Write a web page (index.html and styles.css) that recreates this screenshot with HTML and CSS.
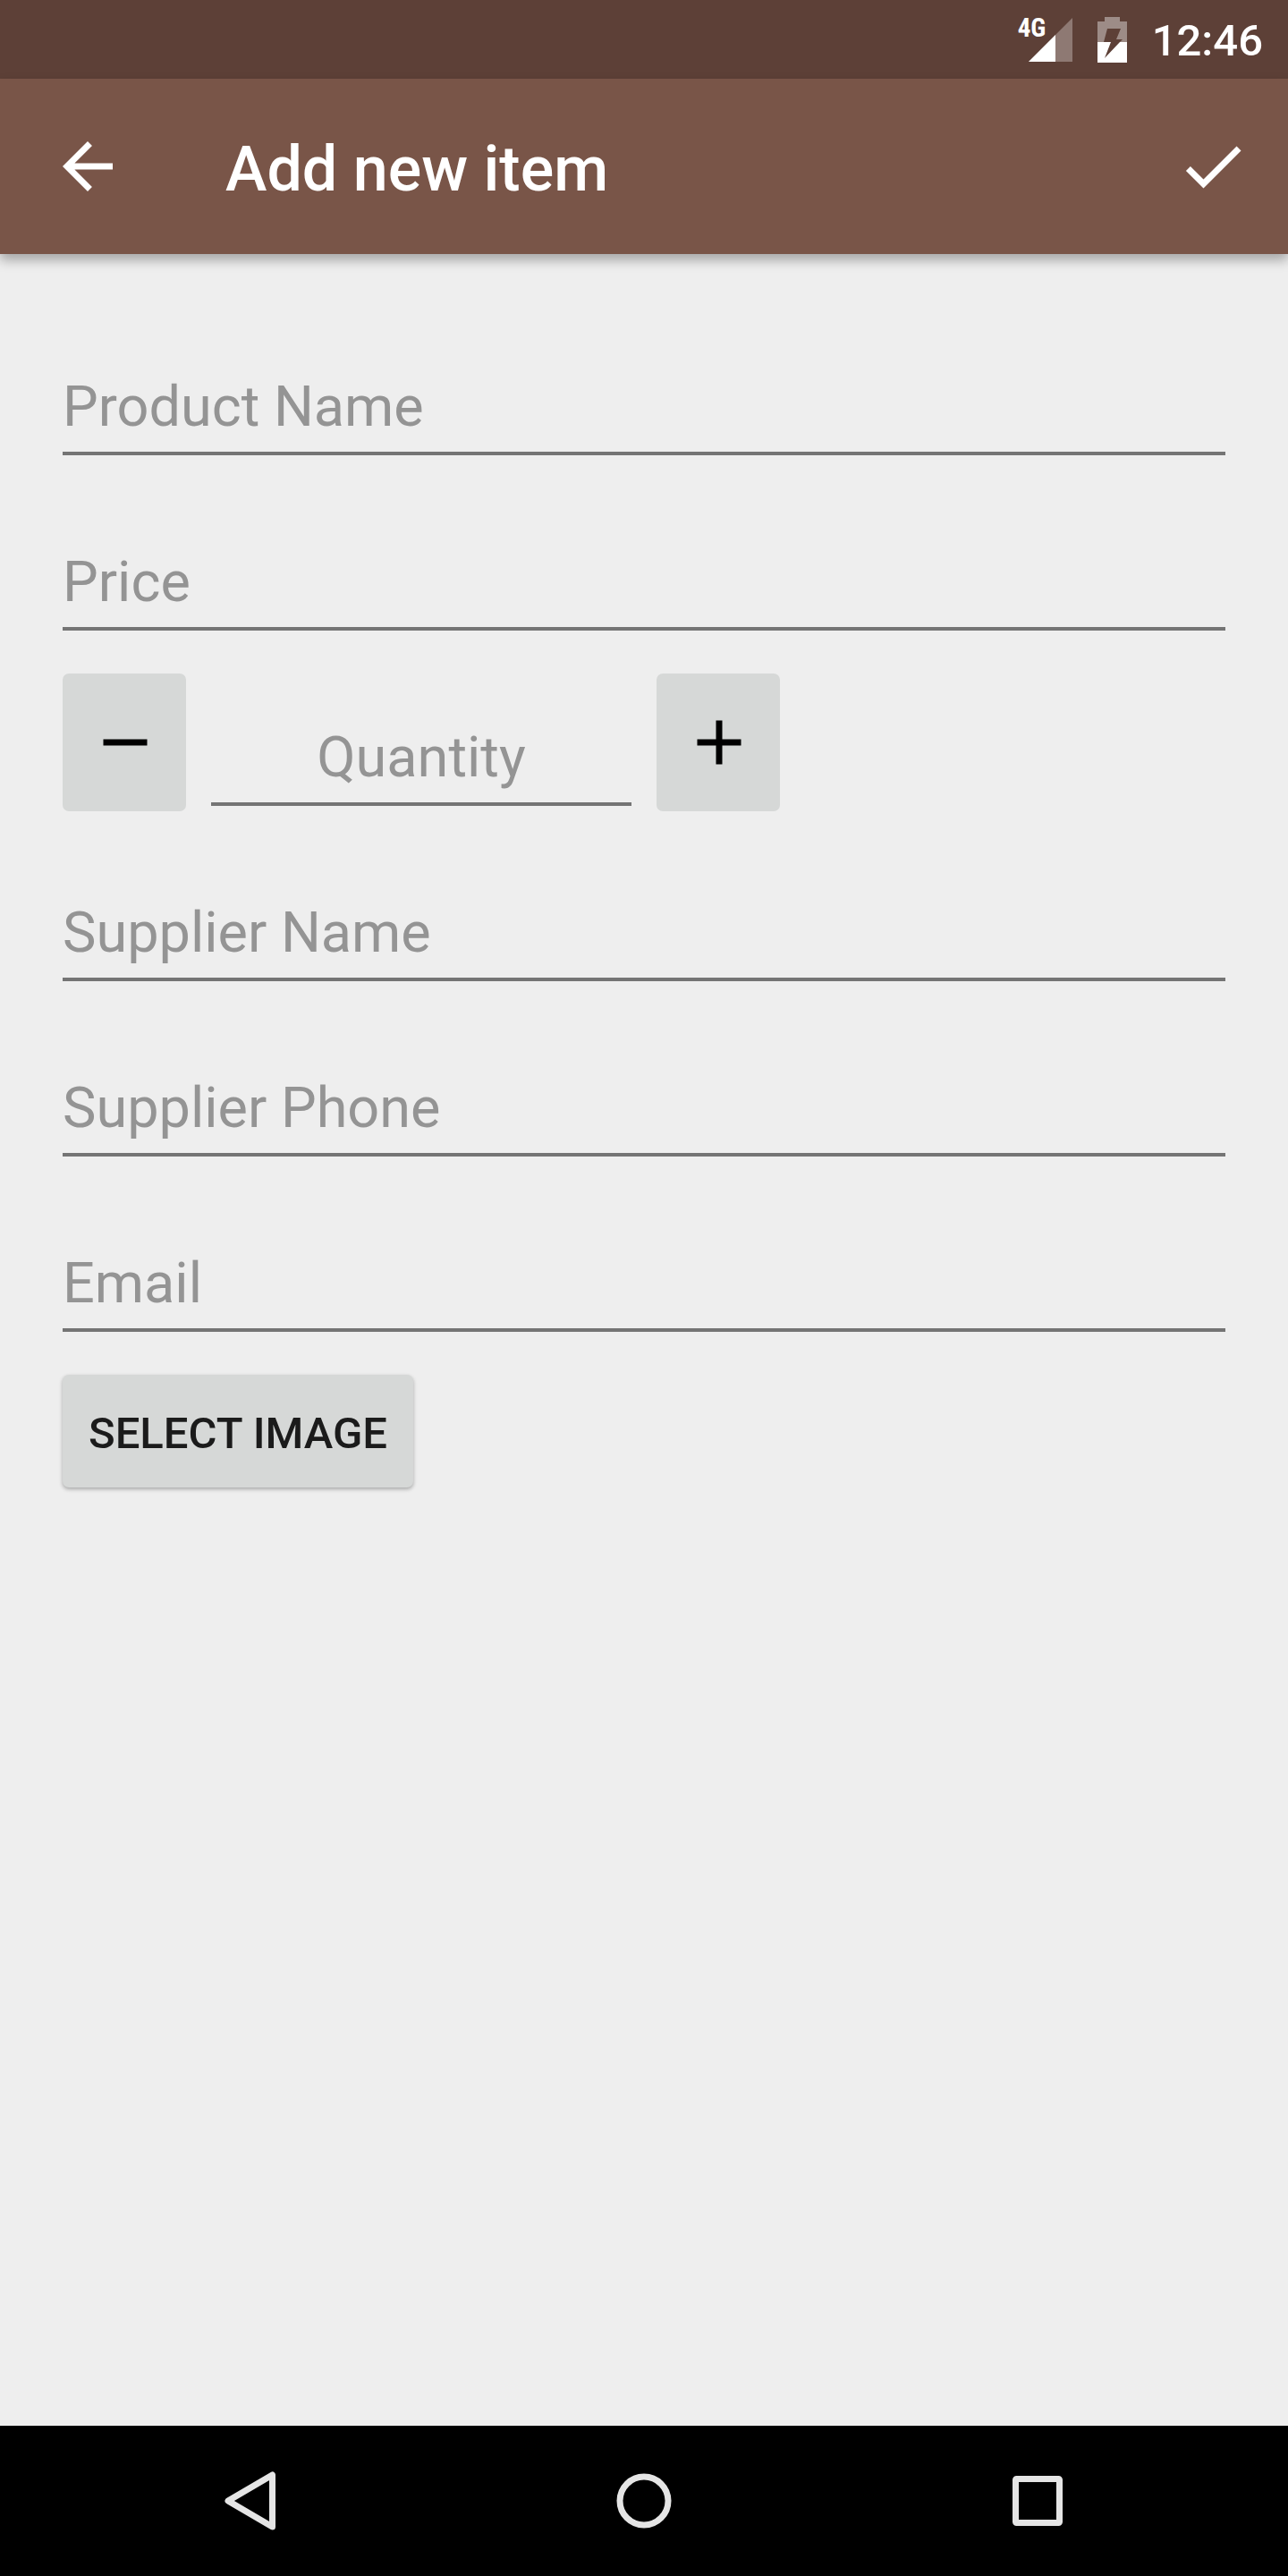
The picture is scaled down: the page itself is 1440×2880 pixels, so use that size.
FILE: index.html
```html
<!DOCTYPE html>
<html lang="en">
<head>
  <meta charset="utf-8">
  <meta name="viewport" content="width=device-width, initial-scale=1">
  <title>Add new item</title>
  <link rel="stylesheet" href="styles.css">
</head>
<body>
  <div class="status-bar">
    <div class="signal">
      <span class="signal-type">4G</span>
      <svg width="49" height="49" viewBox="0 0 49 49" aria-hidden="true">
        <path d="M49 0V49H0Z" fill="#fff" fill-opacity=".3"/>
        <path d="M30 19V49H0Z" fill="#fff"/>
      </svg>
    </div>
    <svg class="battery" width="33" height="51" viewBox="0 0 33 51" aria-hidden="true">
      <path fill="#fff" fill-opacity=".4" d="M8 0H25V5H33V28H25L28 25H21L26 13H11L7 28H0V5H8Z"/>
      <path fill="#fff" d="M0 28H15L8 46L25 28H33V51H0Z"/>
    </svg>
    <time class="clock">12:46</time>
  </div>

  <header class="app-bar">
    <button class="icon-button" type="button" aria-label="Back">
      <svg width="84" height="84" viewBox="0 0 24 24" fill="#fff"><path d="M20 11H7.83l5.59-5.59L12 4l-8 8 8 8 1.41-1.41L7.83 13H20v-2z"/></svg>
    </button>
    <h1 class="title">Add new item</h1>
    <button class="icon-button" type="submit" form="item-form" aria-label="Save">
      <svg width="84" height="84" viewBox="0 0 24 24" fill="#fff"><path d="M9 16.17L4.83 12l-1.42 1.41L9 19 21 7l-1.41-1.41z"/></svg>
    </button>
  </header>

  <main class="content">
    <form class="item-form" id="item-form">
      <input class="field" type="text" placeholder="Product Name" aria-label="Product Name">
      <input class="field" type="text" inputmode="decimal" placeholder="Price" aria-label="Price">
      <div class="quantity-row">
        <button class="step-button" type="button" aria-label="Decrease quantity">
          <svg width="84" height="84" viewBox="0 0 24 24"><path d="M19 13H5v-2h14v2z"/></svg>
        </button>
        <input class="field quantity" type="text" inputmode="numeric" placeholder="Quantity" aria-label="Quantity">
        <button class="step-button" type="button" aria-label="Increase quantity">
          <svg width="84" height="84" viewBox="0 0 24 24"><path d="M19 13h-6v6h-2v-6H5v-2h6V5h2v6h6v2z"/></svg>
        </button>
      </div>
      <input class="field" type="text" placeholder="Supplier Name" aria-label="Supplier Name">
      <input class="field" type="tel" placeholder="Supplier Phone" aria-label="Supplier Phone">
      <input class="field" type="email" placeholder="Email" aria-label="Email">
      <button class="image-button" type="button">SELECT IMAGE</button>
    </form>
  </main>

  <nav class="nav-bar">
    <button class="nav-button" type="button" aria-label="Back">
      <svg width="84" height="84" viewBox="0 0 84 84"><path d="M17 42L66.500 13V71Z"/></svg>
    </button>
    <button class="nav-button" type="button" aria-label="Home">
      <svg width="84" height="84" viewBox="0 0 84 84"><circle cx="42" cy="42" r="27"/></svg>
    </button>
    <button class="nav-button" type="button" aria-label="Recent apps">
      <svg width="84" height="84" viewBox="0 0 84 84"><rect x="17.500" y="17.500" width="49" height="49" rx="1"/></svg>
    </button>
  </nav>
</body>
</html>
```

FILE: styles.css
```css
* {
  box-sizing: border-box;
}

body {
  margin: 0;
  min-height: 100vh;
  display: flex;
  flex-direction: column;
  background: #eeeeee;
  font-family: Roboto, "Liberation Sans", sans-serif;
}

button {
  margin: 0;
  padding: 0;
  border: 0;
  background: none;
  font-family: inherit;
  cursor: pointer;
}

svg {
  display: block;
}

/* System status bar */
.status-bar {
  height: 88px;
  padding: 0 28px 0 0;
  display: flex;
  justify-content: flex-end;
  align-items: center;
  gap: 28px;
  background: #5d4037;
  color: #ffffff;
}

.signal {
  position: relative;
  padding-left: 12px;
}

.signal-type {
  position: absolute;
  top: -4px;
  left: 0;
  font-family: "Roboto Condensed", "Liberation Sans Narrow", Roboto, sans-serif;
  font-size: 29px;
  line-height: 30px;
  font-weight: 700;
}

.clock {
  padding-top: 4px;
  font-size: 49px;
  line-height: 56px;
  font-weight: 500;
}

/* App bar */
.app-bar {
  position: relative;
  height: 196px;
  padding: 0 42px 0 56px;
  display: flex;
  align-items: center;
  background: #795548;
  color: #ffffff;
  box-shadow: 0 7px 12px rgba(0, 0, 0, 0.3);
}

.title {
  flex: 1;
  margin: 0;
  padding: 6px 0 0 112px;
  font-size: 70px;
  line-height: 84px;
  font-weight: 500;
}

/* Form */
.content {
  flex: 1;
}

.item-form {
  padding: 70px;
  display: flex;
  flex-direction: column;
  gap: 35px;
}

.field {
  width: 100%;
  min-width: 0;
  margin: 0 0 6px;
  padding: 64px 0 13px;
  border: 0;
  border-bottom: 4px solid #747474;
  border-radius: 0;
  outline: 0;
  background: none;
  color: #212121;
  font-family: inherit;
  font-size: 63px;
  line-height: 74px;
}

.field::placeholder {
  color: #949494;
  opacity: 1;
}

.quantity-row {
  display: flex;
  align-items: flex-end;
  gap: 28px;
}

.quantity {
  width: 470px;
  text-align: center;
}

.step-button {
  flex: none;
  width: 138px;
  height: 154px;
  padding-left: 2px;
  display: grid;
  place-items: center;
  border-radius: 7px;
  background: #d6d8d7;
}

.image-button {
  align-self: flex-start;
  margin-top: 7px;
  padding: 38px 29px 32px;
  border-radius: 7px;
  background: #d6d8d7;
  box-shadow: 0 2px 4px rgba(0, 0, 0, 0.3);
  color: #1b1b1b;
  font-size: 49px;
  line-height: 56px;
  font-weight: 500;
}

/* System navigation bar */
.nav-bar {
  height: 168px;
  padding: 0 60px;
  display: grid;
  grid-template-columns: repeat(3, 1fr);
  background: #000000;
}

.nav-button {
  display: grid;
  place-items: center;
}

.nav-button svg {
  fill: none;
  stroke: #e5e5e5;
  stroke-width: 7;
  stroke-linejoin: round;
}
```
